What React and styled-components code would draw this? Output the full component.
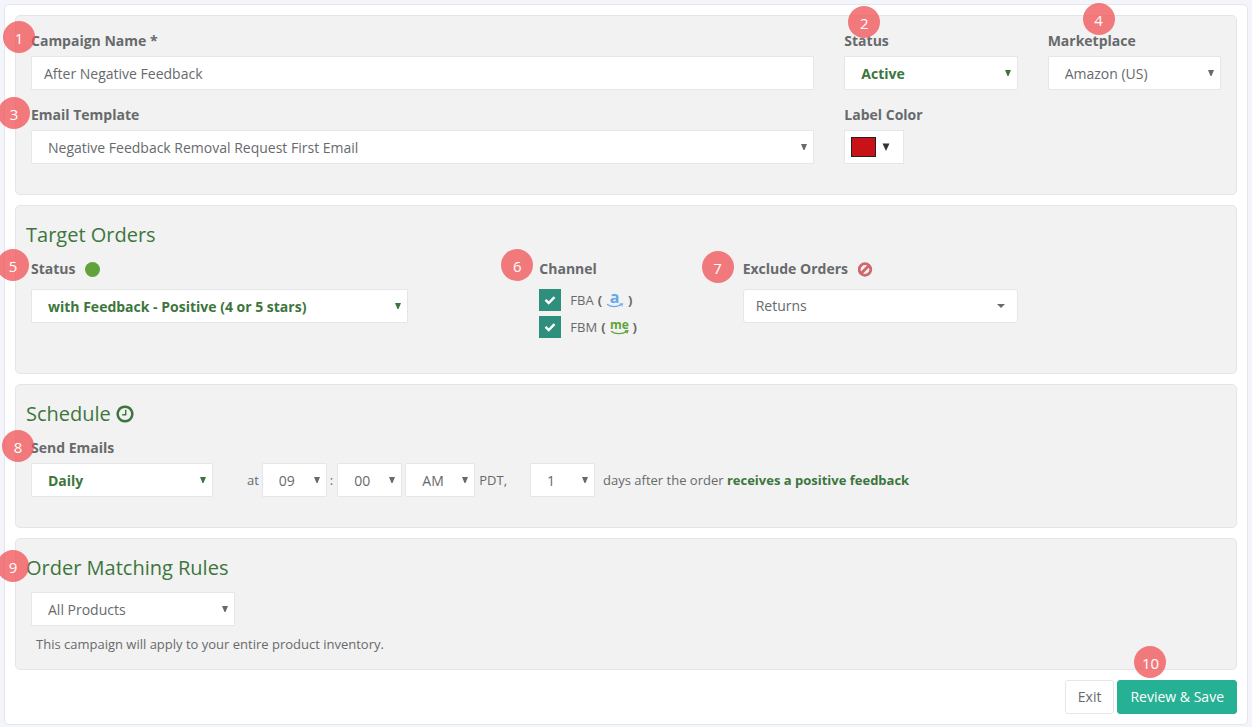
import styled, { createGlobalStyle } from 'styled-components';

const GlobalStyle = createGlobalStyle`
  * {
    box-sizing: border-box;
  }

  body {
    margin: 0;
    padding: 4px;
    background: #f3f5fa;
    color: #676a6c;
    font-family: 'Open Sans', 'Noto Sans', sans-serif;
    font-size: 13px;
    line-height: 20px;
  }
`;

const Card = styled.main`
  position: relative;
  padding: 10px;
  border: 1px solid #e3e6ec;
  border-radius: 5px;
  background: #fff;
`;

const Panel = styled.section`
  padding: 15px 0 ${({$compact}) => ($compact ? 0 : 15)}px;
  margin-bottom: 10px;
  border: 1px solid #e4e5e7;
  border-radius: 5px;
  background: #f2f2f2;
`;

const PanelTitle = styled.h2`
  display: flex;
  align-items: center;
  gap: 5px;
  width: fit-content;
  position: relative;
  margin: 0 0 11px 10px;
  color: #3c763d;
  font-size: 20px;
  font-weight: 400;
  line-height: 27px;
`;

const Grid = styled.div`
  display: grid;
  grid-template-columns: repeat(12, minmax(0, 1fr));
`;

const Field = styled.div`
  position: relative;
  grid-column: ${({$start}) => $start || 'auto'} / span ${({$span}) => $span || 12};
  padding: 0 15px;
  margin-bottom: 15px;
`;

const Label = styled.label`
  display: flex;
  align-items: center;
  gap: 10px;
  height: 20px;
  margin-bottom: ${({$gap}) => $gap || 5}px;
  font-size: 14px;
  font-weight: 700;
`;

const TextInput = styled.input`
  display: block;
  width: 100%;
  height: 34px;
  padding: 0 12px;
  border: 1px solid #e5e6e7;
  border-radius: 1px;
  background: #fff;
  color: inherit;
  font: inherit;
  font-size: 14px;
`;

const SelectBox = styled.div`
  position: relative;
  width: ${({$width}) => ($width ? `${$width}px` : '100%')};
  color: ${({$strong}) => ($strong ? '#3c763d' : '#676a6c')};
`;

const NativeSelect = styled.select`
  display: block;
  appearance: none;
  width: 100%;
  height: 34px;
  padding: ${({$rounded}) => ($rounded ? '0 12px' : '2px 16px 0')};
  border: 1px solid #e5e6e7;
  border-radius: ${({$rounded}) => ($rounded ? 3 : 1)}px;
  background: #fff;
  color: inherit;
  font: inherit;
  font-size: 14px;
  font-weight: ${({$strong}) => ($strong ? 700 : 400)};
`;

const Arrow = styled.svg`
  position: absolute;
  top: ${({$caret}) => ($caret ? 15 : 14)}px;
  right: ${({$caret}) => ($caret ? 13 : 7)}px;
  fill: currentColor;
  pointer-events: none;
`;

const Select = ({id, label, value, width, strong, rounded}) => {
    return (
        <SelectBox $width={width} $strong={strong}>
            <NativeSelect id={id} aria-label={label} defaultValue={value} $strong={strong} $rounded={rounded}>
                <option>{value}</option>
            </NativeSelect>
            {rounded ? (
                <Arrow $caret width="8" height="4" viewBox="0 0 8 4"><path d="M0 0h8L4 4z"/></Arrow>
            ) : (
                <Arrow width="6" height="6" viewBox="0 0 6 6"><path d="M0 0h6L3.500 6h-1z"/></Arrow>
            )}
        </SelectBox>
    );
};

const ColorButton = styled.button`
  display: flex;
  align-items: center;
  gap: 6px;
  width: 60px;
  height: 34px;
  padding: 0 6px;
  border: 1px solid #e5e6e7;
  background: #fff;
  color: #333;
`;

const Swatch = styled.span`
  width: 25px;
  height: 20px;
  border: 1px solid #222;
  background: #c91217;
`;

const StatusDot = styled.span`
  width: 15px;
  height: 15px;
  border-radius: 50%;
  background: #5fa33a;
`;

const CheckRow = styled.label`
  display: flex;
  align-items: center;
  position: relative;
  height: 22px;
  margin-bottom: 5px;
`;

const Checkbox = styled.input`
  appearance: none;
  width: 22px;
  height: 22px;
  margin: 0 9px 0 0;
  border: 1px solid #2f8f7d;
  background: #fff;

  &:checked {
    background: #2f8f7d;
  }

  &:not(:checked) + svg {
    display: none;
  }
`;

const Tick = styled.svg`
  position: absolute;
  top: 6px;
  left: 5px;
  pointer-events: none;
`;

const BrandIcon = styled.svg`
  overflow: visible;
  font-weight: 700;
`;

const Paren = styled.b`
  margin: 0 4px;
`;

const ScheduleRow = styled.div`
  display: flex;
  align-items: center;
  flex-wrap: wrap;
  gap: 3px;
`;

const Text = styled.span`
  margin-left: ${({$left}) => $left || 0}px;
  margin-right: ${({$right}) => $right || 0}px;
`;

const Strong = styled.strong`
  color: #3c763d;
`;

const Hint = styled.p`
  margin: 8px 5px 0;
`;

const Footer = styled.footer`
  display: flex;
  justify-content: flex-end;
  gap: 3px;
`;

const ButtonWrap = styled.div`
  position: relative;
`;

const Button = styled.button`
  height: 34px;
  padding: 0 12px;
  border: 1px solid ${({$primary}) => ($primary ? '#26b094' : '#e3e6ec')};
  border-radius: 3px;
  background: ${({$primary}) => ($primary ? '#26b094' : '#fff')};
  color: ${({$primary}) => ($primary ? '#fff' : '#676a6c')};
  font: inherit;
  font-size: 14px;
`;

const Marker = styled.span`
  position: absolute;
  z-index: 2;
  top: ${({$top}) => $top}px;
  left: ${({$left}) => $left}px;
  width: 32px;
  height: 32px;
  border-radius: 50%;
  background: rgba(240, 80, 84, 0.75);
  color: #fff;
  font-size: 15px;
  font-weight: 400;
  line-height: 34px;
  text-align: center;
`;

const ClockIcon = () => (
    <svg width="18" height="20" viewBox="0 0 1536 1792" fill="currentColor">
        <path d="M896 544v448q0 14-9 23t-23 9h-320q-14 0-23-9t-9-23v-64q0-14 9-23t23-9h224v-352q0-14 9-23t23-9h64q14 0 23 9t9 23zm416 352q0-148-73-273t-198-198-273-73-273 73-198 198-73 273 73 273 198 198 273 73 273-73 198-198 73-273zm224 0q0 209-103 385.500t-279.500 279.500-385.500 103-385.500-103-279.500-279.500-103-385.500 103-385.500 279.500-279.500 385.500-103 385.500 103 279.500 279.500 103 385.500z"/>
    </svg>
);

const BanIcon = () => (
    <svg width="15" height="15" viewBox="0 0 15 15" fill="none" stroke="#d1666b" strokeWidth="2.800">
        <circle cx="7" cy="7.500" r="5.800"/>
        <path d="M11 3.500l-8 8"/>
    </svg>
);

const AmazonIcon = () => (
    <BrandIcon width="18" height="16" viewBox="0 0 18 16">
        <text x="8.500" y="11" textAnchor="middle" fontSize="16" fill="#64a7ee">a</text>
        <path d="M1 12.200c4.500 3 9.500 3 14 .6M13.500 12l3-.2-.8 2.600" fill="none" stroke="#64a7ee" strokeWidth="1.100"/>
    </BrandIcon>
);

const MerchantIcon = () => (
    <BrandIcon width="19" height="16" viewBox="0 0 19 16">
        <text x="9.500" y="10" textAnchor="middle" fontSize="12" fill="#5fa33a">me</text>
        <path d="M1 12.200c4.500 3.200 11 3.200 15.500.6M14.800 12l3-.2-.8 2.600" fill="none" stroke="#5fa33a" strokeWidth="1.300"/>
    </BrandIcon>
);

const Channel = ({name, children}) => {
    return (
        <CheckRow>
            <Checkbox type="checkbox" defaultChecked/>
            <Tick width="12" height="10" viewBox="0 0 12 10">
                <path d="M1.500 4.800l3.200 3.200L10.500 2.200" fill="none" stroke="#fff" strokeWidth="2.400"/>
            </Tick>
            {name}
            <Paren>(</Paren>
            {children}
            <Paren>)</Paren>
        </CheckRow>
    );
};

const App = () => {
    return (
        <>
            <GlobalStyle/>
            <Card>
                <Panel>
                    <Grid>
                        <Field $span={8}>
                            <Marker $top={-10} $left={-13}>1</Marker>
                            <Label htmlFor="name">Campaign Name *</Label>
                            <TextInput id="name" type="text" defaultValue="After Negative Feedback"/>
                        </Field>
                        <Field $span={2}>
                            <Marker $top={-25} $left={19}>2</Marker>
                            <Label htmlFor="status">Status</Label>
                            <Select id="status" value="Active" strong/>
                        </Field>
                        <Field $span={2}>
                            <Marker $top={-28} $left={50}>4</Marker>
                            <Label htmlFor="marketplace">Marketplace</Label>
                            <Select id="marketplace" value="Amazon (US)"/>
                        </Field>
                        <Field $span={8}>
                            <Marker $top={-8} $left={-18}>3</Marker>
                            <Label htmlFor="template">Email Template</Label>
                            <Select id="template" value="Negative Feedback Removal Request First Email"/>
                        </Field>
                        <Field $span={2}>
                            <Label htmlFor="color">Label Color</Label>
                            <ColorButton id="color" type="button">
                                <Swatch/>
                                <svg width="8" height="8" viewBox="0 0 8 8" fill="currentColor"><path d="M.5.500h7L4 8z"/></svg>
                            </ColorButton>
                        </Field>
                    </Grid>
                </Panel>

                <Panel>
                    <PanelTitle>Target Orders</PanelTitle>
                    <Grid>
                        <Field $span={4}>
                            <Marker $top={-10} $left={-19}>5</Marker>
                            <Label htmlFor="order-status" $gap={10}>Status <StatusDot/></Label>
                            <Select id="order-status" value="with Feedback - Positive (4 or 5 stars)" strong/>
                        </Field>
                        <Field $start={6} $span={2}>
                            <Marker $top={-10} $left={-23}>6</Marker>
                            <Label as="div" $gap={10}>Channel</Label>
                            <Channel name="FBA"><AmazonIcon/></Channel>
                            <Channel name="FBM"><MerchantIcon/></Channel>
                        </Field>
                        <Field $span={3}>
                            <Marker $top={-8} $left={-26}>7</Marker>
                            <Label htmlFor="exclude" $gap={10}>Exclude Orders <BanIcon/></Label>
                            <Select id="exclude" value="Returns" rounded/>
                        </Field>
                    </Grid>
                </Panel>

                <Panel>
                    <PanelTitle>Schedule <ClockIcon/></PanelTitle>
                    <Field>
                        <Marker $top={-8} $left={-14}>8</Marker>
                        <Label htmlFor="frequency">Send Emails</Label>
                        <ScheduleRow>
                            <Select id="frequency" value="Daily" width={182} strong/>
                            <Text $left={31}>at</Text>
                            <Select label="Hour" value="09" width={65}/>
                            <Text $right={1}>:</Text>
                            <Select label="Minute" value="00" width={65}/>
                            <Select label="AM or PM" value="AM" width={70}/>
                            <Text $left={1} $right={20}>PDT,</Text>
                            <Select label="Days" value="1" width={65}/>
                            <Text $left={5}>days after the order <Strong>receives a positive feedback</Strong></Text>
                        </ScheduleRow>
                    </Field>
                </Panel>

                <Panel $compact>
                    <PanelTitle>
                        <Marker $top={-4} $left={-29}>9</Marker>
                        Order Matching Rules
                    </PanelTitle>
                    <Field>
                        <Select label="Products" value="All Products" width={204}/>
                        <Hint>This campaign will apply to your entire product inventory.</Hint>
                    </Field>
                </Panel>

                <Footer>
                    <Button type="button">Exit</Button>
                    <ButtonWrap>
                        <Marker $top={-34} $left={17}>10</Marker>
                        <Button type="button" $primary>Review &amp; Save</Button>
                    </ButtonWrap>
                </Footer>
            </Card>
        </>
    );
};

export default App;
